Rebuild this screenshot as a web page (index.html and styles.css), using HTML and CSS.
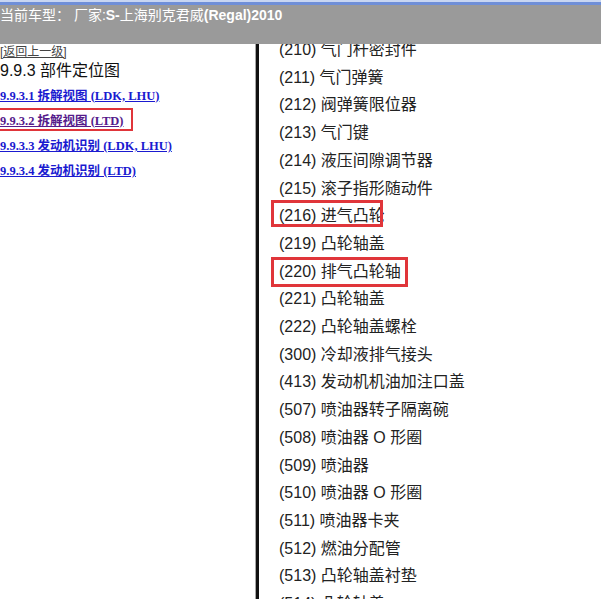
FILE: index.html
```html
<!DOCTYPE html>
<html lang="zh-CN">
<head>
    <meta charset="UTF-8">
    <title>部件定位图</title>
    <link rel="stylesheet" href="styles.css">
</head>
<body>
    <div class="topbar">
        <div class="title">当前车型： 厂家:<b>S-</b>上海别克君威<b>(Regal)2010</b></div>
    </div>

    <div class="frames">
        <div class="nav">
            <a class="back" href="#">[返回上一级]</a>
            <div class="heading">9.9.3 部件定位图</div>
            <a class="sect" href="#">9.9.3.1 拆解视图 (LDK, LHU)</a>
            <a class="sect visited marked" href="#">9.9.3.2 拆解视图 (LTD)</a>
            <a class="sect" href="#">9.9.3.3 发动机识别 (LDK, LHU)</a>
            <a class="sect" href="#">9.9.3.4 发动机识别 (LTD)</a>
        </div>

        <div class="divider"></div>

        <div class="parts">
            <ul class="part-list">
                <li>(210) 气门杆密封件</li>
                <li>(211) 气门弹簧</li>
                <li>(212) 阀弹簧限位器</li>
                <li>(213) 气门键</li>
                <li>(214) 液压间隙调节器</li>
                <li>(215) 滚子指形随动件</li>
                <li class="hit hit-short">(216) 进气凸轮</li>
                <li>(219) 凸轮轴盖</li>
                <li class="hit hit-long">(220) 排气凸轮轴</li>
                <li>(221) 凸轮轴盖</li>
                <li>(222) 凸轮轴盖螺栓</li>
                <li>(300) 冷却液排气接头</li>
                <li>(413) 发动机机油加注口盖</li>
                <li>(507) 喷油器转子隔离碗</li>
                <li>(508) 喷油器 O 形圈</li>
                <li>(509) 喷油器</li>
                <li>(510) 喷油器 O 形圈</li>
                <li>(511) 喷油器卡夹</li>
                <li>(512) 燃油分配管</li>
                <li>(513) 凸轮轴盖衬垫</li>
                <li>(514) 凸轮轴盖</li>
            </ul>
        </div>
    </div>
</body>
</html>
```

FILE: styles.css
```css
body {
    margin: 0;
    width: 601px;
    height: 599px;
    overflow: hidden;
    background: #fff;
    font-family: "Liberation Sans", "Noto Sans CJK SC", sans-serif;
}

/* window title strip + car model bar */
.topbar {
    position: relative;
    z-index: 2;
    height: 44px;
    background: #9a9a9a;
    border-top: 5px solid #6f8fd8;
    box-sizing: border-box;
}

.topbar::before {
    content: "";
    position: absolute;
    left: 0;
    right: 0;
    top: -5px;
    height: 2px;
    background: #c8d6f2;
}

.title {
    color: #fff;
    font-size: 14px;
    line-height: 20px;
    white-space: nowrap;
}

.title b {
    font-weight: bold;
}

.frames {
    display: flex;
    height: 555px;
}

/* left frame */
.nav {
    width: 255px;
    display: flex;
    flex-direction: column;
    align-items: flex-start;
}

.back {
    font-size: 12px;
    line-height: 14px;
    margin-top: 1px;
    color: #444;
    text-decoration: underline;
}

.heading {
    font-size: 16px;
    line-height: 20px;
    margin-top: 2px;
    color: #111;
}

.sect {
    font-family: "Liberation Serif", "Noto Sans CJK SC", serif;
    font-weight: bold;
    font-size: 12.5px;
    line-height: 16px;
    color: #1a1ad0;
    text-decoration: underline;
    margin-top: 9px;
}

.nav .heading + .sect {
    margin-top: 7px;
}

.sect.visited {
    color: #551a8b;
}

.marked {
    position: relative;
}

.marked::after {
    content: "";
    position: absolute;
    left: -3px;
    top: -5px;
    width: 132px;
    height: 19px;
    border: 2px solid #e0353a;
}

.divider {
    width: 3px;
    border-left: 1px solid #a8a8a8;
    background: #111;
}

/* right frame */
.parts {
    flex: 1;
    overflow: hidden;
}

.part-list {
    list-style: none;
    margin: -8px 0 0;
    padding: 0 0 0 20px;
    font-size: 16px;
    line-height: 27.7px;
    color: #222;
}

.part-list li {
    position: relative;
    white-space: nowrap;
}

.hit::after {
    content: "";
    position: absolute;
    left: -8px;
    border: 3px solid #e0353a;
}

.hit-short::after {
    top: -2px;
    width: 106px;
    height: 21px;
}

.hit-long::after {
    top: -1px;
    width: 131px;
    height: 24px;
}
```
